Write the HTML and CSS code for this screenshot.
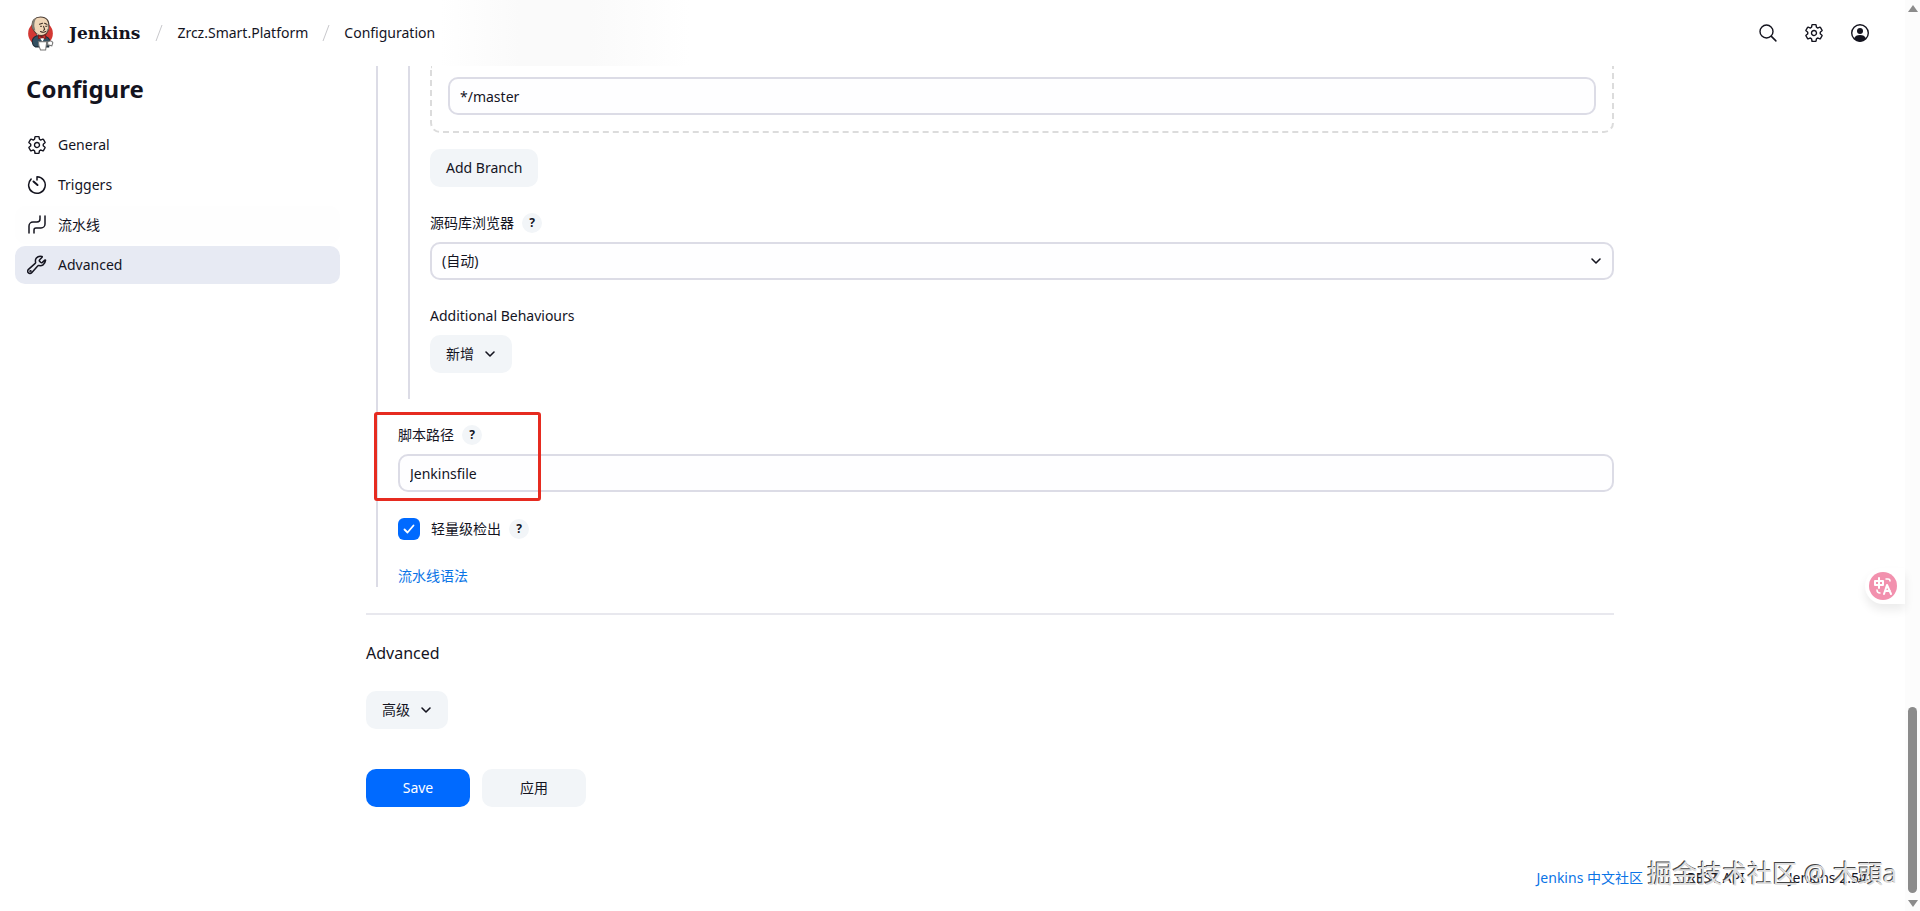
FILE: index.html
```
<!DOCTYPE html>
<html lang="zh-CN">
<head>
    <meta charset="UTF-8">
    <meta name="viewport" content="width=device-width, initial-scale=1.0">
    <title>Zrcz.Smart.Platform Config [Jenkins]</title>
    <link rel="stylesheet" href="styles.css">
</head>
<body>
<!-- shared icons -->
<svg class="icon-defs" aria-hidden="true">
    <symbol id="icon-gear" viewBox="0 0 512 512">
        <path d="M262.29 192.31a64 64 0 1057.4 57.4 64.13 64.13 0 00-57.4-57.4zM416.39 256a154.34 154.34 0 01-1.53 20.79l45.21 35.46a10.81 10.81 0 012.45 13.75l-42.77 74a10.81 10.81 0 01-13.14 4.59l-44.9-18.08a16.11 16.11 0 00-15.17 1.75A164.48 164.48 0 01325 400.8a15.94 15.94 0 00-8.82 12.14l-6.73 47.89a11.08 11.08 0 01-10.68 9.17h-85.54a11.11 11.11 0 01-10.69-8.87l-6.72-47.82a16.07 16.07 0 00-9-12.22 155.3 155.3 0 01-21.46-12.57 16 16 0 00-15.11-1.71l-44.89 18.07a10.81 10.81 0 01-13.14-4.58l-42.77-74a10.8 10.8 0 012.45-13.75l38.21-30a16.05 16.05 0 006-14.08c-.36-4.17-.58-8.33-.58-12.5s.21-8.27.58-12.35a16 16 0 00-6.07-13.94l-38.19-30A10.81 10.81 0 0149.48 186l42.77-74a10.81 10.81 0 0113.14-4.59l44.9 18.08a16.11 16.11 0 0015.17-1.75A164.48 164.48 0 01187 111.2a15.94 15.94 0 008.82-12.14l6.73-47.89A11.08 11.08 0 01213.23 42h85.54a11.11 11.11 0 0110.69 8.87l6.72 47.82a16.07 16.07 0 009 12.22 155.3 155.3 0 0121.46 12.57 16 16 0 0015.11 1.71l44.89-18.07a10.81 10.81 0 0113.14 4.58l42.77 74a10.8 10.8 0 01-2.45 13.75l-38.21 30a16.05 16.05 0 00-6.05 14.08c.33 4.14.55 8.3.55 12.47z" fill="none" stroke="currentColor" stroke-linecap="round" stroke-linejoin="round" stroke-width="36"/>
    </symbol>
    <symbol id="icon-chevron" viewBox="0 0 12 12">
        <path d="M2 4l4 4 4-4" fill="none" stroke="currentColor" stroke-width="1.600" stroke-linecap="round" stroke-linejoin="round"/>
    </symbol>
</svg>

<div class="page">
    <header class="page-header">
        <a class="brand" href="#">
            <svg class="brand-logo" viewBox="0 0 26 34" aria-hidden="true">
                <circle cx="13" cy="17" r="12" fill="#d33833"/>
                <path d="M5 24c1-4 4-5 7-5 5 0 9 1 10 5l-1 6H8c-2-1-3-3-3-6z" fill="#335061" stroke="#1d2b36" stroke-width="1"/>
                <path d="M5 11C4 4 8 1 13 1c6 0 9 4 8 10-.500 5-3 8-7 8-4 0-7-3-9-8z" fill="#f0d6b7" stroke="#4a3c33" stroke-width="1"/>
                <path d="M5 12C4 5 6 3 9 2c-2 3-2 6-2 8l1 4-2-1z" fill="#817c72"/>
                <path d="M20 8l1 4-2 3" fill="none" stroke="#817c72" stroke-width="1"/>
                <path d="M12 8l3-1M17 7l2 1M13 10h1M18 10h1M16 10l1 3-1 1M13 15c2 1 4 1 5 0" fill="none" stroke="#3b2c24" stroke-width="1" stroke-linecap="round"/>
                <path d="M9 17l4 3 5-1-3 6z" fill="#fff"/>
                <path d="M11 19l3 1 4-2v4l-3-1-4 1z" fill="#d33833" stroke="#7a1c1a" stroke-width="1"/>
                <path d="M11 25h8l-1 8h-5c-1-2-2-5-2-8z" fill="#fff" stroke="#777" stroke-width="1"/>
                <path d="M20 25c2-1 4-1 5 1l-1 3-4-1z" fill="#fff" stroke="#777" stroke-width="1"/>
            </svg>
            <span class="brand-name">Jenkins</span>
        </a>
        <nav class="breadcrumbs">
            <svg class="separator" viewBox="0 0 8 18" aria-hidden="true"><path d="M7 1L1 17" stroke="currentColor"/></svg>
            <a href="#">Zrcz.Smart.Platform</a>
            <svg class="separator" viewBox="0 0 8 18" aria-hidden="true"><path d="M7 1L1 17" stroke="currentColor"/></svg>
            <a href="#">Configuration</a>
        </nav>
        <div class="header-actions">
            <button type="button" aria-label="Search">
                <svg viewBox="0 0 20 20"><circle cx="8.500" cy="8.500" r="6.500" fill="none" stroke="currentColor" stroke-width="1.400"/><path d="M13.400 13.400l4.500 4.500" stroke="currentColor" stroke-width="1.500" stroke-linecap="round"/></svg>
            </button>
            <button type="button" aria-label="Manage Jenkins">
                <svg><use href="#icon-gear"/></svg>
            </button>
            <button type="button" aria-label="User">
                <svg viewBox="0 0 20 20"><circle cx="10" cy="10" r="8.300" fill="none" stroke="currentColor" stroke-width="1.400"/><circle cx="10" cy="8" r="3" fill="currentColor"/><path d="M4 15.500c1-2.500 3-3.500 6-3.500s5 1 6 3.500c-1.500 2-3.500 3-6 3s-4.500-1-6-3z" fill="currentColor"/></svg>
            </button>
        </div>
    </header>

    <div class="page-body">
        <aside class="side-panel">
            <h1>Configure</h1>
            <nav class="tasks">
                <a class="task" href="#general">
                    <svg><use href="#icon-gear"/></svg>
                    General
                </a>
                <a class="task" href="#triggers">
                    <svg viewBox="0 0 20 20" fill="none" stroke="currentColor" stroke-width="1.500" stroke-linecap="round" stroke-linejoin="round"><path d="M10 5V1.700a8.300 8.300 0 11-5.900 2.400"/><path d="M6.500 6.500l4 3.500" stroke-width="2"/></svg>
                    Triggers
                </a>
                <a class="task task-hover" href="#pipeline">
                    <svg viewBox="0 0 20 20" fill="none" stroke="currentColor" stroke-width="1.500" stroke-linecap="round" stroke-linejoin="round"><path d="M2 18v-7a4 4 0 014-4h4a3 3 0 003-3V1"/><path d="M7 18v-3a2 2 0 012-2h5a4 4 0 004-4V1"/></svg>
                    流水线
                </a>
                <a class="task task-active" href="#advanced">
                    <svg viewBox="0 0 20 20" fill="none" stroke="currentColor" stroke-width="1.500" stroke-linecap="round" stroke-linejoin="round"><path d="M18.600 5.200c-.1-.4-.5-.4-.8-.1l-2.400 2.300c-.6.500-1.300.4-1.800-.1l-.9-.9c-.5-.5-.5-1.200 0-1.700l2.400-2.500c.3-.3.200-.7-.2-.8-2-.5-4.200 0-5.500 1.600-1 1.200-1.200 2.700-.8 4.200.1.500 0 .9-.4 1.200l-6.700 6c-1 .9-1.100 2.400-.2 3.400.9 1 2.500.9 3.400-.1l6-6.700c.3-.4.700-.5 1.200-.4 1.500.3 3 .1 4.200-.8 1.700-1.200 2.300-2.900 2.500-4.600z"/><circle cx="3.500" cy="16.300" r=".5"/></svg>
                    Advanced
                </a>
            </nav>
        </aside>

        <main class="config">
            <form>
                <div class="nested pipeline">
                    <div class="nested scm">
                        <div class="branch">
                            <input type="text" class="field" value="*/master" aria-label="Branch Specifier">
                        </div>
                        <button type="button" class="btn add-branch">Add Branch</button>

                        <div class="label-row">
                            <label for="browser">源码库浏览器</label>
                            <button type="button" class="help">?</button>
                        </div>
                        <div class="select">
                            <select id="browser" class="field">
                                <option>(自动)</option>
                            </select>
                            <svg class="chevron"><use href="#icon-chevron"/></svg>
                        </div>

                        <div class="label-row behaviours">Additional Behaviours</div>
                        <button type="button" class="btn">新增 <svg class="chevron"><use href="#icon-chevron"/></svg></button>
                    </div>

                    <div class="script-path">
                        <div class="label-row">
                            <label for="scriptPath">脚本路径</label>
                            <button type="button" class="help">?</button>
                        </div>
                        <input type="text" id="scriptPath" class="field" value="Jenkinsfile">
                        <div class="highlight"></div>
                    </div>

                    <div class="check-row">
                        <input type="checkbox" id="lightweight" checked>
                        <label for="lightweight">轻量级检出</label>
                        <button type="button" class="help">?</button>
                    </div>
                    <a class="syntax-link" href="#">流水线语法</a>
                </div>

                <section class="advanced" id="advanced">
                    <h2>Advanced</h2>
                    <button type="button" class="btn">高级 <svg class="chevron"><use href="#icon-chevron"/></svg></button>
                </section>

                <div class="form-actions">
                    <button type="submit" class="btn btn-primary">Save</button>
                    <button type="button" class="btn">应用</button>
                </div>
            </form>
        </main>
    </div>

    <footer class="page-footer">
        <a class="community" href="#">Jenkins 中文社区</a>
        <a href="#">REST API</a>
        <a href="#">Jenkins 2.541</a>
        <span class="watermark">掘金技术社区 @ 木頭a</span>
    </footer>

    <button type="button" class="translate" aria-label="Translate">
        <svg viewBox="0 0 28 28" aria-hidden="true">
            <circle cx="14" cy="14" r="14" fill="#f291ae"/>
            <g fill="none" stroke="#fff" stroke-width="2" stroke-linecap="round" stroke-linejoin="round">
                <path d="M6 9h8v4H6zM10 6v10"/>
                <path d="M15 22l3-9 4 9M16 19h5"/>
                <path d="M17 7h2q2 0 2 2M8 18q0 3 3 3" stroke-width="1.500"/>
            </g>
        </svg>
    </button>
</div>

<div class="scrollbar" aria-hidden="true">
    <span class="arrow-up"></span>
    <span class="thumb"></span>
    <span class="arrow-down"></span>
</div>
</body>
</html>
```
FILE: styles.css
```
* {
    box-sizing: border-box;
}

body {
    display: flex;
    min-height: 100vh;
    margin: 0;
    background: #fff;
    color: #14141f;
    font-family: "Noto Sans", "Noto Sans CJK SC", sans-serif;
    font-size: 14px;
    line-height: 20px;
}

a {
    color: inherit;
    text-decoration: none;
}

button,
input,
select {
    font: inherit;
    color: inherit;
}

button {
    border: none;
    background: none;
    padding: 0;
    cursor: pointer;
}

.icon-defs {
    display: none;
}

.page {
    position: relative;
    display: flex;
    flex-direction: column;
    flex: 1;
}

/* header */
.page-header {
    display: flex;
    align-items: center;
    height: 66px;
    padding: 0 35px 0 27px;
    background: linear-gradient(90deg, #fff 440px, #fafafa 520px, #fafafa 590px, #fff 690px);
}

.brand {
    display: flex;
    align-items: center;
    gap: 15px;
}

.brand-logo {
    width: 27px;
    height: 35px;
}

.brand-name {
    font-family: "DejaVu Serif", serif;
    font-size: 17px;
    font-weight: bold;
}

.breadcrumbs {
    display: flex;
    align-items: center;
    gap: 14px;
    margin-left: 15px;
}

.separator {
    width: 8px;
    height: 18px;
    color: #c8c8cc;
}

.header-actions {
    display: flex;
    gap: 26px;
    margin-left: auto;
}

.header-actions button,
.header-actions svg {
    display: block;
    width: 20px;
    height: 20px;
}

/* side panel */
.page-body {
    display: flex;
    flex: 1;
}

.side-panel {
    width: 340px;
    padding: 8px 0 0 15px;
}

.side-panel h1 {
    margin: 0 0 22px 11px;
    font-size: 24px;
    line-height: 30px;
}

.tasks {
    display: flex;
    flex-direction: column;
    gap: 2px;
}

.task {
    display: flex;
    align-items: center;
    gap: 11px;
    height: 38px;
    padding: 0 12px;
    border-radius: 10px;
}

.task svg {
    width: 20px;
    height: 20px;
}

.task-hover {
    background: #fefefe;
}

.task-active {
    background: #e7eaf3;
}

/* form */
.config {
    flex: 1;
    max-width: 1274px;
    padding-left: 26px;
}

.nested {
    border-left: 2px solid #dcdce6;
}

.pipeline {
    margin-left: 10px;
    padding: 0 0 1px 20px;
}

.scm {
    margin-left: 10px;
    padding: 0 0 26px 20px;
}

.branch {
    margin-bottom: 16px;
    padding: 11px 16px 16px;
    border: 2px dashed #dcdcdc;
    border-top: none;
    border-radius: 0 0 10px 10px;
}

.field {
    display: block;
    width: 100%;
    height: 38px;
    padding: 0 10px;
    border: 2px solid #dcdce6;
    border-radius: 10px;
    background: #fefeff;
}

.btn {
    display: inline-flex;
    align-items: center;
    justify-content: center;
    gap: 10px;
    height: 38px;
    padding: 0 16px;
    border-radius: 10px;
    background: #f2f5f8;
}

.chevron {
    width: 12px;
    height: 12px;
}

.add-branch {
    display: flex;
    margin-bottom: 26px;
}

.label-row {
    display: flex;
    align-items: center;
    gap: 8px;
    height: 20px;
    margin-bottom: 9px;
}

.help {
    width: 20px;
    height: 20px;
    border-radius: 50%;
    background: #f2f5f8;
    font-size: 12px;
    font-weight: bold;
}

.select {
    position: relative;
}

.select select {
    appearance: none;
}

.select .chevron {
    position: absolute;
    top: 13px;
    right: 12px;
    pointer-events: none;
}

.behaviours {
    margin-top: 26px;
}

.script-path {
    position: relative;
    margin: 26px 0;
}

/* red frame drawn over the script path field */
.highlight {
    position: absolute;
    top: -13px;
    left: -24px;
    width: 167px;
    height: 89px;
    border: 3px solid #e62b20;
    border-radius: 3px;
    pointer-events: none;
}

.check-row {
    display: flex;
    align-items: center;
    gap: 8px;
    margin-bottom: 26px;
}

.check-row input {
    appearance: none;
    width: 22px;
    height: 22px;
    margin: 0 3px 0 0;
    border-radius: 6px;
    background: #006aff url("data:image/svg+xml,%3Csvg xmlns='http://www.w3.org/2000/svg' viewBox='0 0 22 22'%3E%3Cpath d='M6.500 11.500l3 3 6-7' fill='none' stroke='white' stroke-width='1.800' stroke-linecap='round' stroke-linejoin='round'/%3E%3C/svg%3E");
}

.syntax-link {
    display: block;
    color: #0a74e6;
}

.advanced {
    margin-top: 26px;
    padding-top: 26px;
    border-top: 2px solid #e8e8ee;
}

.advanced h2 {
    margin: 0 0 26px;
    font-size: 16px;
    font-weight: normal;
    line-height: 24px;
}

.form-actions {
    display: flex;
    gap: 12px;
    margin-top: 40px;
}

.form-actions .btn {
    min-width: 104px;
}

.form-actions .btn-primary {
    background: #006aff;
    color: #fff;
}

/* footer */
.page-footer {
    position: relative;
    display: flex;
    justify-content: flex-end;
    gap: 44px;
    padding: 0 30px 23px;
}

.community {
    color: #0a74e6;
}

.watermark {
    position: absolute;
    right: 8px;
    bottom: 20px;
    color: #dedede;
    font-size: 25px;
    line-height: 36px;
    white-space: nowrap;
    text-shadow: -1px -1px 0 #444;
}

/* floating translate button */
.translate {
    position: absolute;
    right: 0;
    top: 568px;
    width: 40px;
    height: 36px;
    padding: 4px;
    border-radius: 18px 0 0 18px;
    background: #fff;
    box-shadow: 0 6px 10px rgba(0, 0, 0, 0.08);
}

.translate svg {
    display: block;
    width: 28px;
    height: 28px;
}

/* scrollbar */
.scrollbar {
    display: flex;
    flex-direction: column;
    align-items: center;
    width: 15px;
    padding: 5px 0 4px;
    background: #fcfcfc;
}

.arrow-up,
.arrow-down {
    border: 5px solid transparent;
}

.arrow-up {
    border-top: none;
    border-bottom: 7px solid #8b8b8b;
}

.arrow-down {
    border-bottom: none;
    border-top: 7px solid #8b8b8b;
}

.thumb {
    width: 9px;
    height: 186px;
    margin: auto 0 7px;
    border-radius: 5px;
    background: #8b8b8b;
}
```
